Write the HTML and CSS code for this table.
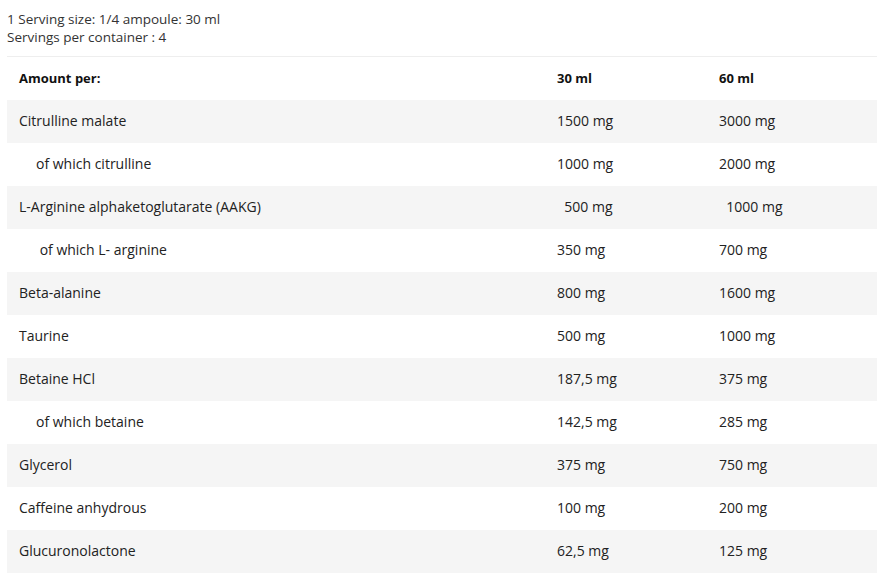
FILE: index.html
```html
<!DOCTYPE html>
<html>
<head>
<meta charset="utf-8">
<link rel="stylesheet" href="styles.css">
</head>
<body>
<div class="wrap">
  <p class="intro">1 Serving size: 1/4 ampoule: 30 ml<br>Servings per container : 4</p>
  <table class="facts">
    <thead>
      <tr><th>Amount per:</th><th>30 ml</th><th>60 ml</th></tr>
    </thead>
    <tbody>
      <tr><td>Citrulline malate</td><td>1500 mg</td><td>3000 mg</td></tr>
      <tr><td class="sub">of which citrulline</td><td>1000 mg</td><td>2000 mg</td></tr>
      <tr><td>L-Arginine alphaketoglutarate (AAKG)</td><td>&nbsp; 500 mg</td><td>&nbsp; 1000 mg</td></tr>
      <tr><td class="sub">&nbsp;of which L- arginine</td><td>350 mg</td><td>700 mg</td></tr>
      <tr><td>Beta-alanine</td><td>800 mg</td><td>1600 mg</td></tr>
      <tr><td>Taurine</td><td>500 mg</td><td>1000 mg</td></tr>
      <tr><td>Betaine HCl</td><td>187,5 mg</td><td>375 mg</td></tr>
      <tr><td class="sub">of which betaine</td><td>142,5 mg</td><td>285 mg</td></tr>
      <tr><td>Glycerol</td><td>375 mg</td><td>750 mg</td></tr>
      <tr><td>Caffeine anhydrous</td><td>100 mg</td><td>200 mg</td></tr>
      <tr><td>Glucuronolactone</td><td>62,5 mg</td><td>125 mg</td></tr>
    </tbody>
  </table>
</div>
</body>
</html>
```

FILE: styles.css
```css
html, body {
  margin: 0;
  padding: 0;
  background: #fff;
}
body {
  font-family: "Open Sans", "Liberation Sans", sans-serif;
  font-size: 14px;
  color: #222;
}
.wrap {
  padding: 0 7px;
}
.intro {
  margin: 10px 0 10px;
  font-size: 13.5px;
  line-height: 18px;
  color: #333;
}
.facts {
  width: 870px;
  border-collapse: collapse;
  border-top: 1px solid #eeeeee;
  font-size: 14px;
}
.facts th, .facts td {
  height: 43px;
  padding: 0 12px 1px;
  text-align: left;
  vertical-align: middle;
  box-sizing: border-box;
}
.facts th {
  font-size: 13px;
  font-weight: 700;
  color: #111;
}
.facts th:nth-child(1), .facts td:nth-child(1) { width: 538px; }
.facts th:nth-child(2), .facts td:nth-child(2) { width: 162px; }
.facts tbody tr:nth-child(odd) {
  background: #f5f5f5;
}
.facts td.sub {
  padding-left: 29px;
}
```
